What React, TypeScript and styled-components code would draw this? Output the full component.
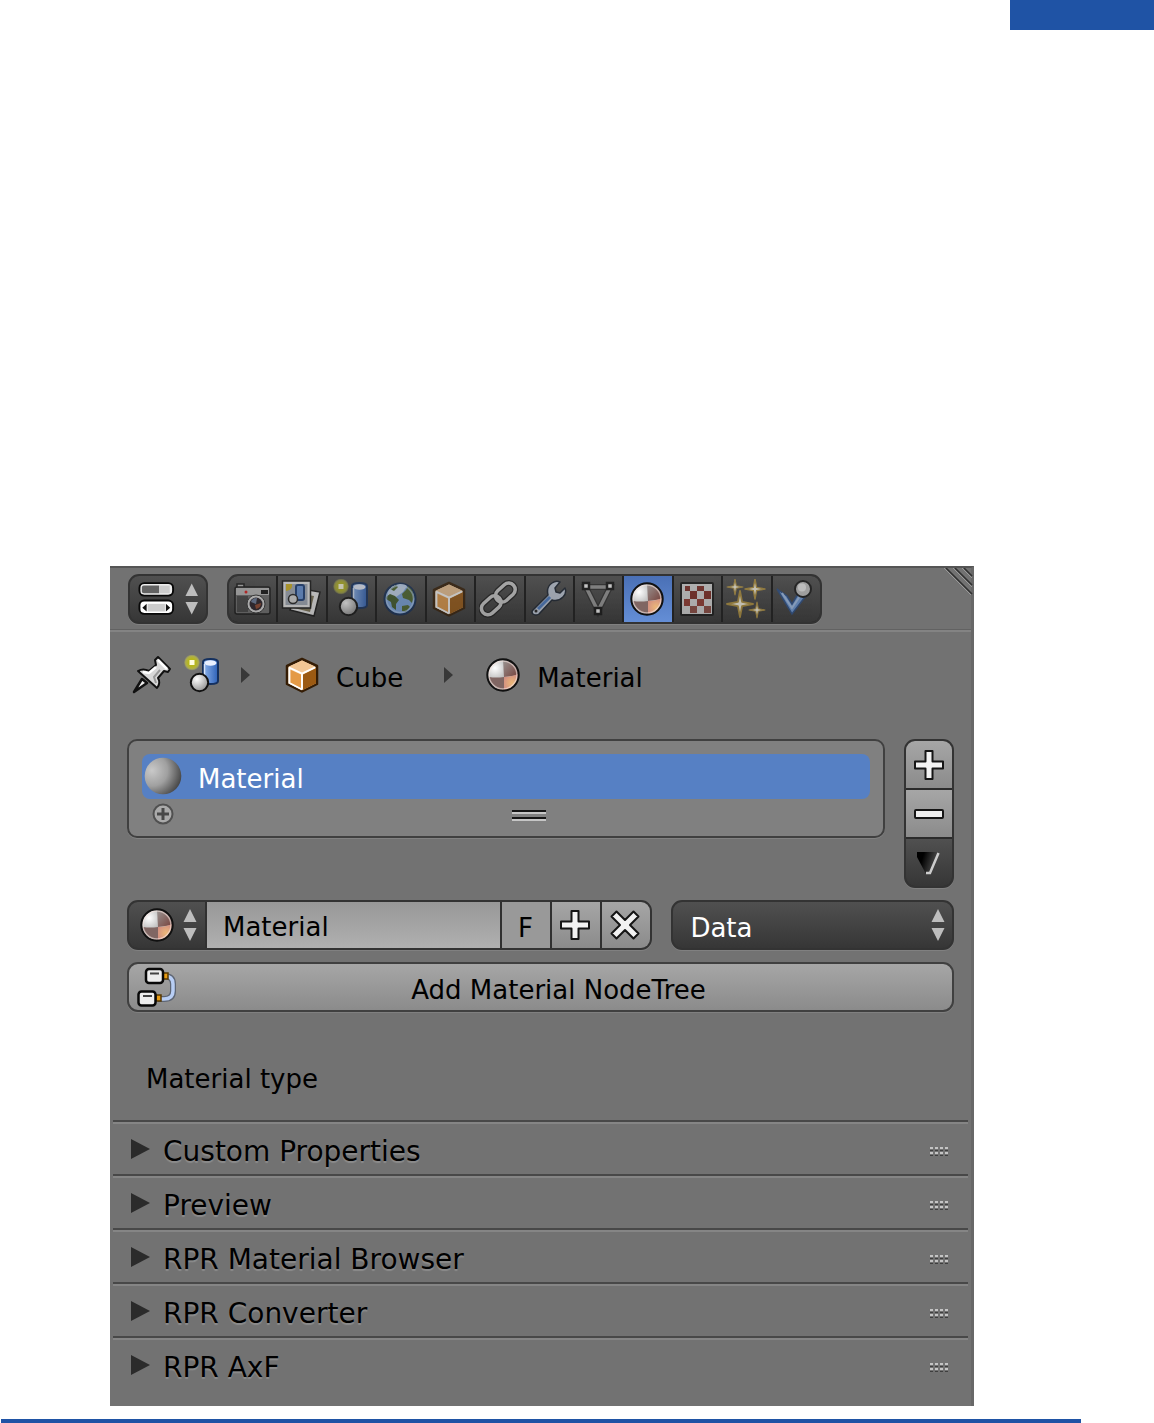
import React, { useId } from "react";
import styled, { createGlobalStyle, css } from "styled-components";

const GlobalStyle = createGlobalStyle`
  *, *::before, *::after { box-sizing: border-box; }
  body {
    margin: 0;
    background: #fff;
    color: #000;
    font-family: "DejaVu Sans", Verdana, sans-serif;
    font-size: 26px;
    line-height: 32px;
  }
  button, input, select { font: inherit; color: inherit; margin: 0; }
`;

/* ---------- page ---------- */

const Page = styled.div`
  display: flex;
  flex-direction: column;
`;

const PageHeader = styled.header`
  display: flex;
  justify-content: flex-end;
  margin-bottom: 536px;
`;

const HeaderMark = styled.div`
  width: 144px;
  height: 30px;
  background: #1f53a5;
`;

const PageFooter = styled.footer`
  height: 4px;
  margin: 13px 73px 0 1px;
  background: #1f53a5;
`;

const Panel = styled.main`
  position: relative;
  margin: 0 180px 0 110px;
  padding-bottom: 16px;
  background: #727272;
  border-top: 2px solid #555;
  border-right: 3px solid #686868;
`;

const CornerGrip = styled.svg`
  position: absolute;
  top: 0;
  right: -2px;
`;

/* ---------- shared control surfaces ---------- */

const dark = css`
  background: linear-gradient(#505050, #363636);
`;
const light = css`
  background: linear-gradient(#a6a6a6, #8b8b8b);
`;
const outline = css`
  border: 2px solid #333;
  border-radius: 11px;
  box-shadow: 0 1px 0 #808080;
`;

const Toolbar = styled.div`
  display: flex;
  gap: 19px;
  padding: 6px 18px 5px;
  border-bottom: 1px solid #626262;
  box-shadow: 0 2px 0 #838383;
`;

const EditorButton = styled.button`
  ${dark}
  ${outline}
  display: flex;
  align-items: center;
  gap: 10px;
  width: 80px;
  height: 50px;
  padding: 0 8px;
`;

const TabGroup = styled.div`
  ${outline}
  display: flex;
  flex: 0 1 595px;
  height: 50px;
  overflow: hidden;
  background: #222;
  gap: 2px;
`;

const Tab = styled.button<{ $active?: boolean }>`
  display: flex;
  flex: 1 1 0;
  align-items: center;
  justify-content: center;
  min-width: 0;
  padding: 0 2px 0 0;
  border: 0;
  background: ${(p) =>
    p.$active ? "linear-gradient(#4a70b6, #648ed6)" : "linear-gradient(#505050, #363636)"};
  svg { opacity: ${(p) => (p.$active ? 1 : 0.68)}; flex: none; }
`;

const Breadcrumb = styled.nav`
  display: flex;
  align-items: center;
  height: 40px;
  margin: 25px 22px 44px;
`;

const Crumb = styled.a`
  display: flex;
  align-items: center;
  gap: 14px;
  color: #000;
  text-decoration: none;
  span { padding-top: 5px; }
`;

const PinButton = styled.button`
  display: flex;
  padding: 0;
  margin-right: 10px;
  border: 0;
  background: none;
`;

const CrumbArrow = styled.svg<{ $wide?: boolean }>`
  flex: none;
  margin: 0 ${(p) => (p.$wide ? 30 : 32)}px 0 ${(p) => (p.$wide ? 41 : 19)}px;
`;

/* ---------- material slots ---------- */

const Content = styled.div`
  display: flex;
  flex-direction: column;
  gap: 12px;
  padding: 0 17px;
`;

const SlotArea = styled.div`
  display: flex;
  align-items: flex-start;
  gap: 19px;
`;

const SlotBox = styled.div`
  display: flex;
  flex: 1;
  flex-direction: column;
  padding: 13px 13px 5px;
  border: 2px solid #404040;
  border-radius: 10px;
  background: #808080;
  box-shadow: 0 1px 0 #828282;
`;

const Slot = styled.button`
  display: flex;
  align-items: center;
  gap: 14px;
  flex: none;
  height: 45px;
  padding: 0 2px;
  border: 0;
  border-radius: 8px;
  background: #5680c4;
  color: #fff;
  text-align: left;
  span { padding-top: 5px; }
  svg { margin-bottom: 2px; }
`;

const SlotFooter = styled.div`
  display: grid;
  grid-template-columns: 22px 1fr;
  gap: 14px;
  align-items: center;
  height: 32px;
  padding: 0 0 2px 10px;
`;

const ResizeHandle = styled.div`
  display: flex;
  justify-content: center;
  padding-top: 4px;
`;

const PlainButton = styled.button`
  display: flex;
  padding: 0;
  border: 0;
  background: none;
`;

const SlotActions = styled.div`
  ${outline}
  display: flex;
  flex-direction: column;
  gap: 2px;
  width: 50px;
  height: 149px;
  overflow: hidden;
  background: #2b2b2b;
`;

const ActionButton = styled.button<{ $dark?: boolean }>`
  ${(p) => (p.$dark ? dark : light)}
  display: flex;
  flex: 1;
  align-items: center;
  justify-content: center;
  padding: 0;
  border: 0;
`;

const DataRow = styled.div`
  display: flex;
  gap: 19px;
`;

const DataBlock = styled.div`
  ${outline}
  display: flex;
  flex: 524 1 0;
  gap: 2px;
  height: 50px;
  overflow: hidden;
  background: #303030;
`;

const BrowseButton = styled.button`
  ${dark}
  display: flex;
  flex: none;
  align-items: center;
  gap: 6px;
  width: 76px;
  padding: 0 8px;
  border: 0;
`;

const NameInput = styled.input`
  flex: 1;
  min-width: 0;
  padding: 4px 16px 0;
  border: 0;
  border-radius: 0;
  outline: 0;
  background: linear-gradient(#989898, #b0b0b0);
`;

const BlockButton = styled.button`
  ${light}
  display: flex;
  flex: none;
  align-items: center;
  justify-content: center;
  width: 48px;
  padding: 0 2px 0 0;
  border: 0;
`;

const FakeUserButton = styled(BlockButton)`
  padding-top: 5px;
  background: #999;
`;

const SelectWrap = styled.div`
  position: relative;
  flex: 284 1 0;
  svg {
    position: absolute;
    top: 8px;
    right: 9px;
    pointer-events: none;
  }
`;

const LinkSelect = styled.select`
  ${dark}
  ${outline}
  width: 100%;
  height: 50px;
  padding: 5px 17px 0;
  appearance: none;
  color: #fff;
`;

const NodeTreeButton = styled.button`
  ${light}
  ${outline}
  display: grid;
  grid-template-columns: 40px 1fr;
  align-items: center;
  height: 50px;
  padding: 0 12px 0 8px;
  border-color: #404040;
  span { padding-top: 5px; }
`;

const TypeLabel = styled.p`
  margin: 51px 36px 25px;
`;

/* ---------- collapsed sections ---------- */

const Sections = styled.div`
  padding: 0 3px;
`;

const SectionTitle = styled.h2`
  margin: 0;
  font-size: 28px;
  font-weight: 400;
  line-height: 36px;
`;

const SectionButton = styled.button`
  display: flex;
  align-items: center;
  width: 100%;
  height: 54px;
  padding: 4px 20px 0 18px;
  border: 0;
  border-top: 2px solid #484848;
  background: none;
  box-shadow: inset 0 2px 0 #858585;
  text-align: left;
  text-shadow: 0 2px 1px #8c8c8c;
  span { flex: 1; padding: 3px 0 0 13px; }
`;

/* ---------- icons ---------- */

function Icon({ children, size = 40 }: { children: React.ReactNode; size?: number }) {
  return (
    <svg width={size} height={size} viewBox="0 0 40 40" fill="none" aria-hidden="true">
      {children}
    </svg>
  );
}

const UpDown = () => (
  <svg width="14" height="34" viewBox="0 0 14 34" fill="#bdbdbd" aria-hidden="true">
    <path d="M7 1 13.500 14H.5ZM7 33 13.500 20H.5Z" />
  </svg>
);

const EditorIcon = () => (
  <svg width="38" height="36" viewBox="0 0 38 36" aria-hidden="true">
    <rect x="1.500" y="1.500" width="35" height="13" rx="5" fill="#eee" stroke="#080808" strokeWidth="2" />
    <path d="M6 4h16v8H6q-2 0-2-2V6q0-2 2-2Z" fill="#626262" />
    <path d="M22 4h11v8H22Z" fill="#ccc" />
    <rect x="1.500" y="19.500" width="35" height="14" rx="5" fill="#fff" stroke="#080808" strokeWidth="2" />
    <rect x="10" y="23" width="18" height="8" fill="#ccc" />
    <path d="M4.500 27 9 23v8ZM33.500 27 29 23v8Z" fill="#111" />
  </svg>
);

const CameraIcon = () => (
  <Icon>
    <path d="M5 9V5h7v4Z" fill="#bbb" stroke="#151515" strokeWidth="1.500" />
    <rect x="3" y="8" width="35" height="27" rx="2" fill="#6f6f6f" stroke="#151515" strokeWidth="1.500" />
    <path d="M4 9h33v7H4Z" fill="#bcbcbc" />
    <path d="M5 17h11v16H5Z" fill="#454545" />
    <path d="M29 11h7v4h-7Z" fill="#111" />
    <circle cx="14" cy="13" r="1.500" fill="#e21818" />
    <circle cx="24" cy="25" r="9" fill="#ddd" stroke="#333" strokeWidth="1" />
    <circle cx="24" cy="25" r="6.500" fill="#271d25" />
    <path d="M19 23a6 6 0 0 1 6-4l-1 6Z" fill="#6c7d9c" />
    <path d="M24 30a6 6 0 0 0 5-6l-6 2Z" fill="#93442a" />
  </Icon>
);

const LayersIcon = () => (
  <Icon>
    <path d="m16 9 23 4-6 24-24-6Z" fill="#eee" stroke="#151515" strokeWidth="1.500" />
    <path d="m16 14 17 3-4 16-16-4Z" fill="#7d7456" />
    <rect x="1.500" y="2" width="28" height="27" fill="#eee" stroke="#151515" strokeWidth="1.500" />
    <rect x="4.500" y="5" width="22" height="21" fill="#a5adba" />
    <path d="M5 5h6q1 6-6 7Z" fill="#d5b51d" />
    <rect x="15" y="6" width="8" height="15" rx="2" fill="#6594dc" stroke="#183c78" strokeWidth="2" />
    <circle cx="12" cy="20" r="4.500" fill="#ddd" stroke="#222" strokeWidth="1.500" />
  </Icon>
);

const SceneIcon = () => {
  const id = useId();
  return (
    <Icon>
      <defs>
        <radialGradient id={id + "g"}>
          <stop offset=".5" stopColor="#b5b51e" />
          <stop offset=".8" stopColor="#c5c53c" stopOpacity=".7" />
          <stop offset="1" stopColor="#d0d060" stopOpacity="0.100" />
        </radialGradient>
        <linearGradient id={id + "c"}>
          <stop stopColor="#8eb4ed" />
          <stop offset="1" stopColor="#2d61b7" />
        </linearGradient>
        <radialGradient id={id + "s"} cx=".35" cy=".3" r=".8">
          <stop stopColor="#fff" />
          <stop offset="1" stopColor="#8a8a8a" />
        </radialGradient>
      </defs>
      <circle cx="10" cy="7.500" r="8" fill={`url(#${id}g)`} />
      <rect x="7.500" y="5" width="5" height="5" fill="#fffde0" />
      <path d="M21 7q0-3 7.500-3T36 7v19q0 3-7.500 3T21 26Z" fill={`url(#${id}c)`} stroke="#14305f" strokeWidth="2" />
      <ellipse cx="28.500" cy="8" rx="6" ry="2.800" fill="#e9f0ff" />
      <path d="M22.500 9v15" stroke="#d8e5fb" strokeWidth="1.500" />
      <circle cx="17.500" cy="27.500" r="8.700" fill={`url(#${id}s)`} stroke="#111" strokeWidth="2" />
    </Icon>
  );
};

const WorldIcon = () => (
  <Icon>
    <circle cx="20" cy="20" r="15.500" fill="#7aa6e2" stroke="#132c54" strokeWidth="2" />
    <path d="M8 13q3-7 12-8 5 0 7 2l-4 6-7 5-8-1Z" fill="#c9dbf2" />
    <path d="m6 18 4-3 5 2 4 4-3 4 0 6-4-3-1-5-5-3Z" fill="#3f5a26" />
    <path d="m22 15 4-4 2-4 4 4 2 7-2 6-3-3-6-2ZM22 27l6-1 2 2-4 5-4-1ZM10 10l6-4 2 2-4 4Z" fill="#4d672c" />
    <circle cx="20" cy="20" r="13.500" stroke="#b9d4f8" strokeOpacity=".6" strokeWidth="1.500" />
  </Icon>
);

const CubeIcon = () => (
  <Icon>
    <path d="M20 4 35 11v18l-15 7.500L5 29V11Z" fill="#f7d9b4" stroke="#351d05" strokeWidth="2.500" strokeLinejoin="round" />
    <path d="M20 5.500 33 11.500 20 17.500 7 11.500Z" fill="#f3c795" />
    <path d="M8 14.500 19 19.500v14L8 28Z" fill="#e49a46" />
    <path d="M21 19.500 34 13v15.500l-13 6.500Z" fill="#9c5a12" />
    <path d="M7 12.500 20 18.500 33 12.500M20 18.500V34M7.500 13v15L20 34.500" stroke="#fff" strokeWidth="1.800" />
  </Icon>
);

const ChainIcon = () => (
  <Icon>
    <g transform="rotate(-42 20 20)">
      {["#1c1c1c", "#d0d0d0"].map((c, i) => (
        <g key={c} stroke={c} strokeWidth={i ? 3.5 : 6}>
          <rect x="-1" y="13" width="22" height="13" rx="6.500" />
          <rect x="18" y="13" width="22" height="13" rx="6.500" />
        </g>
      ))}
    </g>
  </Icon>
);

const WrenchIcon = () => (
  <Icon>
    <path
      d="M5 31 20 16q-2-8 4-12 4-3 8-1l-5 6 1 4 4 1 5-5q2 5-2 9-5 5-11 3L11 35q-3 2-6 0-2-2 0-4Z"
      fill="#c5cfdf" stroke="#17202d" strokeWidth="1.500" strokeLinejoin="round"
    />
    <path d="M10 30 22 18" stroke="#4a7cc6" strokeWidth="3" />
    <circle cx="8" cy="32" r="1.500" fill="#222" />
  </Icon>
);

const MeshIcon = () => (
  <Icon>
    <path d="M8 8h24L20 32Z" stroke="#2b2b2b" strokeWidth="6" />
    <path d="M8 8h24L20 32Z" stroke="#9a9a9a" strokeWidth="3.500" />
    <path d="M5 4h6v6H5ZM29 4h6v6h-6ZM17 29h6v6h-6Z" fill="#fff" stroke="#111" strokeWidth="2.500" />
  </Icon>
);

const MaterialIcon = () => {
  const id = useId();
  return (
    <Icon>
      <defs>
        <radialGradient id={id + "a"} cx="12" cy="13" r="13" gradientUnits="userSpaceOnUse">
          <stop stopColor="#fff" />
          <stop offset="1" stopColor="#b8b8b8" />
        </radialGradient>
        <linearGradient id={id + "b"} x1="0" y1="0" x2="1" y2="1">
          <stop stopColor="#9a9593" />
          <stop offset="1" stopColor="#75403a" />
        </linearGradient>
        <radialGradient id={id + "c"} cx="29" cy="28" r="9" gradientUnits="userSpaceOnUse">
          <stop stopColor="#ebb878" />
          <stop offset="1" stopColor="#d38f82" />
        </radialGradient>
      </defs>
      <circle cx="20" cy="20" r="15" fill={`url(#${id}a)`} />
      <path d="M20 5a15 15 0 0 1 15 15l-14 2Z" fill={`url(#${id}b)`} />
      <path d="M6 22q7 1 15 0v13A15 15 0 0 1 6 22Z" fill="#806663" />
      <path d="M21 22q8 0 14-3a15 15 0 0 1-14 16Z" fill={`url(#${id}c)`} />
      <circle cx="20" cy="20" r="14" stroke="#f3e3dd" strokeOpacity=".6" strokeWidth="1.500" />
      <circle cx="20" cy="20" r="15.700" stroke="#101010" strokeWidth="2" />
    </Icon>
  );
};

const TextureIcon = () => (
  <Icon>
    <rect x="4" y="4" width="32" height="32" rx="1" fill="#dedede" stroke="#151515" strokeWidth="2" />
    <path d="M8 7h5v5H8ZM20 7h7v5h-7Z" fill="#812c24" />
    <path d="M13 12h7v8h-7ZM27 12h7v8h-7Z" fill="#812920" />
    <path d="M7 20h6v7H7ZM20 20h7v7h-7Z" fill="#96372d" />
    <path d="M13 27h7v7h-7ZM27 27h7v7h-7Z" fill="#8f4a40" />
  </Icon>
);

function Star({ x, y, r }: { x: number; y: number; r: number }) {
  return (
    <path
      transform={`translate(${x} ${y}) scale(${r})`}
      d="M0-1 .16-.16 1 0 .16.16 0 1-.16.16-1 0-.16-.16Z"
      fill="#fffbe9" stroke="#b3923c" strokeWidth=".14" strokeLinejoin="round"
    />
  );
}

const ParticlesIcon = () => (
  <Icon>
    <Star x={9} y={8} r={8} />
    <Star x={29} y={10} r={10} />
    <Star x={14} y={25} r={13} />
    <Star x={31} y={31} r={8} />
  </Icon>
);

const PhysicsIcon = () => (
  <Icon>
    <path d="m2 10 10 7 5 8 6-10 7 3-13 17Z" fill="#6f9ee0" stroke="#294d86" strokeWidth="1.500" />
    <path d="m7 14 10 15 8-12" stroke="#a6c5ef" strokeWidth="2" />
    <circle cx="28" cy="10" r="8" fill="#c9c9c9" stroke="#151515" strokeWidth="2" />
    <circle cx="27" cy="8.500" r="4" fill="#f4f4f4" />
  </Icon>
);

const PinIcon = () => (
  <Icon>
    <path d="m2 37 8-13 5 4Z" fill="#eee" stroke="#111" strokeWidth="2.500" strokeLinejoin="round" />
    <path
      d="m26 2 12 12-2 3-4-1-6 7q3 5-1 10L6 16q5-3 11 0l7-6-1-5Z"
      fill="#d8d8d8" stroke="#111" strokeWidth="2" strokeLinejoin="round"
    />
    <path d="m26 5 9 9M24 12l-7 6-6-1" stroke="#fff" strokeWidth="2.500" />
    <path d="m28 15-6 7 2 6" stroke="#9a9a9a" strokeWidth="2" />
  </Icon>
);

const BallIcon = () => {
  const id = useId();
  return (
    <Icon>
      <radialGradient id={id} cx=".2" cy=".35" r=".85">
        <stop stopColor="#c9c9c9" />
        <stop offset=".5" stopColor="#a0a0a0" />
        <stop offset="1" stopColor="#424242" />
      </radialGradient>
      <circle cx="19" cy="20" r="18.300" fill={`url(#${id})`} />
    </Icon>
  );
};

const ExpandIcon = () => (
  <svg width="22" height="22" viewBox="0 0 22 22" aria-hidden="true">
    <circle cx="11" cy="11" r="9.500" fill="#aaa" stroke="#505050" strokeWidth="2" />
    <path d="M11 5v12M5 11h12" stroke="#484848" strokeWidth="3" />
  </svg>
);

const ResizeIcon = () => (
  <svg width="36" height="14" viewBox="0 0 36 14" aria-hidden="true">
    <path d="M1 2h34M1 9h34" stroke="#151515" strokeWidth="2" />
    <path d="M1 4h34M1 11h34" stroke="#c6c6c6" strokeWidth="2" />
  </svg>
);

const PlusIcon = () => (
  <svg width="30" height="30" viewBox="0 0 30 30" aria-hidden="true">
    <path
      d="M11.500 1h7v10.500H29v7H18.500V29h-7V18.500H1v-7h10.500Z"
      fill="#f2f2f2" stroke="#151515" strokeWidth="2" strokeLinejoin="round"
    />
  </svg>
);

const CrossIcon = () => (
  <svg width="30" height="30" viewBox="0 0 30 30" aria-hidden="true">
    <path
      d="m6.500 1.500 8.500 8.500 8.500-8.500 5 5L20 15l8.500 8.500-5 5L15 20l-8.500 8.500-5-5L10 15 1.500 6.500Z"
      fill="#f2f2f2" stroke="#151515" strokeWidth="2" strokeLinejoin="round"
    />
  </svg>
);

const MinusIcon = () => (
  <svg width="30" height="10" viewBox="0 0 30 10" aria-hidden="true">
    <rect x="1" y="1" width="28" height="8" rx="1" fill="#eee" stroke="#151515" strokeWidth="2" />
  </svg>
);

const MenuIcon = () => {
  const id = useId();
  return (
    <svg width="26" height="24" viewBox="0 0 26 24" aria-hidden="true">
      <linearGradient id={id} x1="0" y1="0" x2="1" y2=".3">
        <stop offset=".3" stopColor="#000" />
        <stop offset="1" stopColor="#555" />
      </linearGradient>
      <path d="M1 1h22L14 23h-4L1 6Z" fill={`url(#${id})`} />
      <path d="M22.500 2 14 22h-4" fill="none" stroke="#ccc" strokeWidth="2.500" />
    </svg>
  );
};

const NodeTreeIcon = () => (
  <Icon>
    <path d="M27 9q9 0 9 8v7q0 8-9 8h-6" stroke="#5d6573" strokeWidth="6" />
    <path d="M27 9q9 0 9 8v7q0 8-9 8h-6" stroke="#b8cef5" strokeWidth="3.500" />
    <path d="M26 6h5v6h-5ZM19 28h5v6h-5Z" fill="#e79b12" stroke="#583900" strokeWidth="1.500" />
    <rect x="9" y="2" width="17" height="14" rx="3" fill="#eee" stroke="#080808" strokeWidth="2.500" />
    <rect x="1.500" y="24.500" width="17" height="14" rx="3" fill="#eee" stroke="#080808" strokeWidth="2.500" />
    <path d="M13 6.500h9M6 29h9" stroke="#444" strokeWidth="2" />
  </Icon>
);

const SectionArrow = () => (
  <svg width="19" height="22" viewBox="0 0 19 22" aria-hidden="true">
    <path d="M0 0 19 10 0 20Z" fill="#2b2b2b" />
  </svg>
);

const DragDots = () => (
  <svg width="18" height="14" viewBox="0 0 18 14" aria-hidden="true">
    {[0, 5, 10, 15].map((x) => (
      <g key={x}>
        <path d={`M${x} 5h3M${x} 10h3`} stroke="#c4c4c4" strokeWidth="2" />
        <path d={`M${x} 7.500h3M${x} 12.500h3`} stroke="#3e3e3e" />
      </g>
    ))}
  </svg>
);

/* ---------- data ---------- */

const tabs = [
  { name: "Render", Glyph: CameraIcon },
  { name: "Render Layers", Glyph: LayersIcon },
  { name: "Scene", Glyph: SceneIcon },
  { name: "World", Glyph: WorldIcon },
  { name: "Object", Glyph: CubeIcon },
  { name: "Constraints", Glyph: ChainIcon },
  { name: "Modifiers", Glyph: WrenchIcon },
  { name: "Mesh Data", Glyph: MeshIcon },
  { name: "Material", Glyph: MaterialIcon },
  { name: "Texture", Glyph: TextureIcon },
  { name: "Particles", Glyph: ParticlesIcon },
  { name: "Physics", Glyph: PhysicsIcon },
];

const sections = [
  "Custom Properties",
  "Preview",
  "RPR Material Browser",
  "RPR Converter",
  "RPR AxF",
];

export default function App() {
  return (
    <>
      <GlobalStyle />
      <Page>
        <PageHeader>
          <HeaderMark />
        </PageHeader>
        <Panel>
          <CornerGrip width="30" height="28" viewBox="0 0 30 28" fill="none" aria-hidden="true">
            <path d="M3 0 29 26M12 0l17 17M21 0l8 8" stroke="#303030" strokeWidth="1.500" />
            <path d="M1 0 28 27M10 0l19 19M19 0l10 10" stroke="#9a9a9a" />
          </CornerGrip>
          <Toolbar>
            <EditorButton type="button" aria-label="Editor type">
              <EditorIcon />
              <UpDown />
            </EditorButton>
            <TabGroup role="tablist" aria-label="Properties">
              {tabs.map(({ name, Glyph }) => (
                <Tab
                  key={name}
                  type="button"
                  role="tab"
                  aria-label={name}
                  aria-selected={name === "Material"}
                  $active={name === "Material"}
                >
                  <Glyph />
                </Tab>
              ))}
            </TabGroup>
          </Toolbar>

          <Breadcrumb aria-label="Context">
            <PinButton type="button" aria-label="Pin">
              <PinIcon />
            </PinButton>
            <Crumb href="#scene" aria-label="Scene">
              <SceneIcon />
            </Crumb>
            <CrumbArrow width="9" height="16" viewBox="0 0 9 16" aria-hidden="true">
              <path d="M0 0 9 8 0 16Z" fill="#383838" />
            </CrumbArrow>
            <Crumb href="#cube">
              <CubeIcon />
              <span>Cube</span>
            </Crumb>
            <CrumbArrow $wide width="9" height="16" viewBox="0 0 9 16" aria-hidden="true">
              <path d="M0 0 9 8 0 16Z" fill="#383838" />
            </CrumbArrow>
            <Crumb href="#material">
              <MaterialIcon />
              <span>Material</span>
            </Crumb>
          </Breadcrumb>

          <Content>
            <SlotArea>
              <SlotBox>
                <Slot type="button" aria-pressed="true">
                  <BallIcon />
                  <span>Material</span>
                </Slot>
                <SlotFooter>
                  <PlainButton type="button" aria-label="Show filter">
                    <ExpandIcon />
                  </PlainButton>
                  <ResizeHandle>
                    <ResizeIcon />
                  </ResizeHandle>
                </SlotFooter>
              </SlotBox>
              <SlotActions>
                <ActionButton type="button" aria-label="Add slot">
                  <PlusIcon />
                </ActionButton>
                <ActionButton type="button" aria-label="Remove slot">
                  <MinusIcon />
                </ActionButton>
                <ActionButton type="button" $dark aria-label="Slot menu">
                  <MenuIcon />
                </ActionButton>
              </SlotActions>
            </SlotArea>

            <DataRow>
              <DataBlock>
                <BrowseButton type="button" aria-label="Browse materials">
                  <MaterialIcon />
                  <UpDown />
                </BrowseButton>
                <NameInput aria-label="Material name" defaultValue="Material" />
                <FakeUserButton type="button">F</FakeUserButton>
                <BlockButton type="button" aria-label="New material">
                  <PlusIcon />
                </BlockButton>
                <BlockButton type="button" aria-label="Unlink material">
                  <CrossIcon />
                </BlockButton>
              </DataBlock>
              <SelectWrap>
                <LinkSelect aria-label="Link material to" defaultValue="Data">
                  <option>Data</option>
                </LinkSelect>
                <UpDown />
              </SelectWrap>
            </DataRow>

            <NodeTreeButton type="button">
              <NodeTreeIcon />
              <span>Add Material NodeTree</span>
            </NodeTreeButton>
          </Content>

          <TypeLabel>Material type</TypeLabel>

          <Sections>
            {sections.map((title) => (
              <SectionTitle key={title}>
                <SectionButton type="button" aria-expanded="false">
                  <SectionArrow />
                  <span>{title}</span>
                  <DragDots />
                </SectionButton>
              </SectionTitle>
            ))}
          </Sections>
        </Panel>
        <PageFooter />
      </Page>
    </>
  );
}
